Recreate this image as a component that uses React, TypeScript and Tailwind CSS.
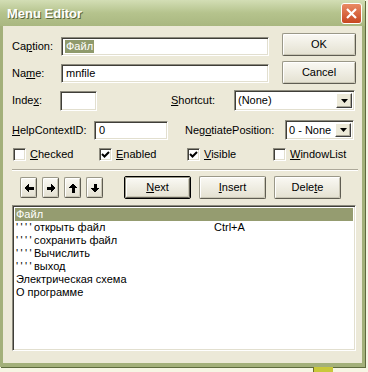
const sunken =
  "border border-t-[#8D8B7E] border-l-[#8D8B7E] border-r-white border-b-white shadow-[inset_1px_1px_0_#3F3E38,inset_-1px_-1px_0_#E2DFCF] bg-white";

const raised =
  "rounded-[2px] border border-t-[#9A9888] border-l-[#9A9888] border-r-[#5F5D52] border-b-[#5F5D52] bg-linear-to-b from-[#FAF9F4] to-[#E4E1D1] shadow-[inset_1px_1px_0_#FFFFFF,inset_-1px_-1px_0_#C9C6B5]";

type ArrowDir = "left" | "right" | "up" | "down";

function Arrow({ dir }: { dir: ArrowDir }) {
  const rot =
    dir === "left" ? 0 : dir === "right" ? 180 : dir === "up" ? 90 : 270;
  return (
    <svg width="10" height="10" viewBox="0 0 10 10" shapeRendering="crispEdges">
      <g transform={`rotate(${rot} 5 5)`}>
        <path d="M0.5 5 L5 0.5 L5 3.5 L9.5 3.5 L9.5 6.5 L5 6.5 L5 9.5 Z" fill="#000" />
      </g>
    </svg>
  );
}

function DropButton() {
  return (
    <div className="ml-auto w-[16px] h-full flex items-center justify-center border border-t-white border-l-white border-r-[#404040] border-b-[#404040] bg-[#ECE9D8] shadow-[inset_-1px_-1px_0_#ACA899]">
      <svg width="7" height="4" viewBox="0 0 7 4">
        <path d="M0 0 H7 L3.5 4 Z" fill="#000" />
      </svg>
    </div>
  );
}

function Select({ value, w, h }: { value: string; w: string; h: string }) {
  return (
    <div className={`${sunken} ${w} ${h} flex items-stretch p-[2px]`}>
      <span className="pl-[1px] self-center">{value}</span>
      <DropButton />
    </div>
  );
}

function Check({ on, u, rest, w }: { on: boolean; u: string; rest: string; w: string }) {
  return (
    <div className={`flex items-center gap-[4px] ${w}`}>
      <div className={`${sunken} w-[13px] h-[13px] flex items-center justify-center`}>
        {on && (
          <svg width="9" height="9" viewBox="0 0 9 9">
            <path d="M1 4 L3.5 6.5 L8 2" stroke="#000" strokeWidth="2" fill="none" />
          </svg>
        )}
      </div>
      <span>
        <u>{u}</u>
        {rest}
      </span>
    </div>
  );
}

const items: { text: string; sub: boolean; key?: string }[] = [
  { text: "открыть файл", sub: true, key: "Ctrl+A" },
  { text: "сохранить файл", sub: true },
  { text: "Вычислить", sub: true },
  { text: "выход", sub: true },
  { text: "Электрическая схема", sub: false },
  { text: "О программе", sub: false },
];

export default function App() {
  return (
    <div className="w-[368px] h-[372px] bg-[#F6F6E4] overflow-hidden font-['Liberation_Sans',Arial,sans-serif] text-[11px] text-black leading-none">
      <div className="w-[365px] h-[367px] flex flex-col bg-[#A3B07A] shadow-[1px_1px_0_#5E6B3D]">
        {/* title bar */}
        <div className="h-[26px] shrink-0 flex items-center pl-[7px] pr-[3px] bg-linear-to-b from-[#D3DEB5] via-[#B5C38D] to-[#A9B780]">
          <span className="text-[13px] font-bold text-white [text-shadow:1px_1px_0_#5A6639]">
            Menu Editor
          </span>
          <div className="ml-auto w-[21px] h-[21px] rounded-[3px] border border-white bg-linear-to-b from-[#E98A63] to-[#C7461F] flex items-center justify-center">
            <svg width="13" height="13" viewBox="0 0 13 13">
              <path d="M2 2 L11 11 M11 2 L2 11" stroke="#fff" strokeWidth="2.2" />
            </svg>
          </div>
        </div>

        {/* body */}
        <div className="flex-1 mx-[3px] mb-[4px] bg-[#ECE9D8] pl-[9px] flex flex-col">
          <div className="mt-[7px] flex">
            <div className="mt-[4px] flex flex-col gap-[8px]">
              <div className="flex items-center h-[19px]">
                <span className="w-[49px]">
                  Ca<u>p</u>tion:
                </span>
                <div className={`${sunken} w-[208px] h-[19px] flex items-center pl-[3px]`}>
                  <span className="bg-[#8F9A6C] text-white px-[1px] py-[1px]">Файл</span>
                </div>
              </div>
              <div className="flex items-center h-[19px]">
                <span className="w-[49px]">
                  Na<u>m</u>e:
                </span>
                <div className={`${sunken} w-[208px] h-[19px] flex items-center pl-[4px]`}>
                  mnfile
                </div>
              </div>
            </div>
            <div className="ml-[13px] flex flex-col gap-[5px]">
              <div className={`${raised} w-[74px] h-[23px] flex items-center justify-center`}>OK</div>
              <div className={`${raised} w-[74px] h-[23px] flex items-center justify-center`}>Cancel</div>
            </div>
          </div>

          <div className="mt-[6px] h-[21px] flex items-center">
            <span className="w-[48px]">
              Inde<u>x</u>:
            </span>
            <div className={`${sunken} w-[37px] h-[20px]`} />
            <span className="ml-[74px] w-[63px]">
              <u>S</u>hortcut:
            </span>
            <Select value="(None)" w="w-[121px]" h="h-[21px]" />
          </div>

          <div className="mt-[9px] h-[20px] flex items-center">
            <span className="w-[82px]">
              <u>H</u>elpContextID:
            </span>
            <div className={`${sunken} w-[74px] h-[19px] flex items-center pl-[4px]`}>0</div>
            <span className="ml-[17px] w-[100px]">
              Neg<u>o</u>tiatePosition:
            </span>
            <Select value="0 - None" w="w-[69px]" h="h-[20px]" />
          </div>

          <div className="mt-[8px] h-[13px] flex items-center pl-[1px]">
            <Check on={false} u="C" rest="hecked" w="w-[86px]" />
            <Check on u="E" rest="nabled" w="w-[88px]" />
            <Check on u="V" rest="isible" w="w-[86px]" />
            <Check on={false} u="W" rest="indowList" w="w-[80px]" />
          </div>

          <div className="mt-[8px] w-[346px] h-[2px] border-t border-t-[#ACA899] border-b border-b-white" />

          <div className="mt-[5px] h-[23px] flex items-center">
            <div className="ml-[8px] flex gap-[5px]">
              {(["left", "right", "up", "down"] as ArrowDir[]).map((d) => (
                <div key={d} className={`${raised} w-[17px] h-[21px] flex items-center justify-center`}>
                  <Arrow dir={d} />
                </div>
              ))}
            </div>
            <div className="ml-[21px] flex gap-[8px]">
              <div className="w-[67px] h-[23px] rounded-[2px] border border-black flex">
                <div className={`${raised} flex-1 flex items-center justify-center`}>
                  <span>
                    <u>N</u>ext
                  </span>
                </div>
              </div>
              <div className={`${raised} w-[67px] h-[23px] flex items-center justify-center`}>
                <span>
                  <u>I</u>nsert
                </span>
              </div>
              <div className={`${raised} w-[67px] h-[23px] flex items-center justify-center`}>
                <span>
                  Dele<u>t</u>e
                </span>
              </div>
            </div>
          </div>

          <div className={`${sunken} mt-[6px] w-[344px] h-[146px] p-[2px] flex flex-col`}>
            <div className="h-[13px] bg-[#959C70] text-white flex items-center pl-[1px]">Файл</div>
            {items.map((it) => (
              <div key={it.text} className="h-[13px] flex items-center pl-[1px]">
                <span className="w-[198px]">
                  {it.sub && <span className="tracking-[2.4px]">''''</span>}
                  {it.text}
                </span>
                {it.key && <span>{it.key}</span>}
              </div>
            ))}
          </div>
        </div>
      </div>
      <div className="flex h-[5px]">
        <div className="ml-[313px] w-[20px] h-full bg-[#C8C83A] border-l border-[#6E6E2A]" />
      </div>
    </div>
  );
}
